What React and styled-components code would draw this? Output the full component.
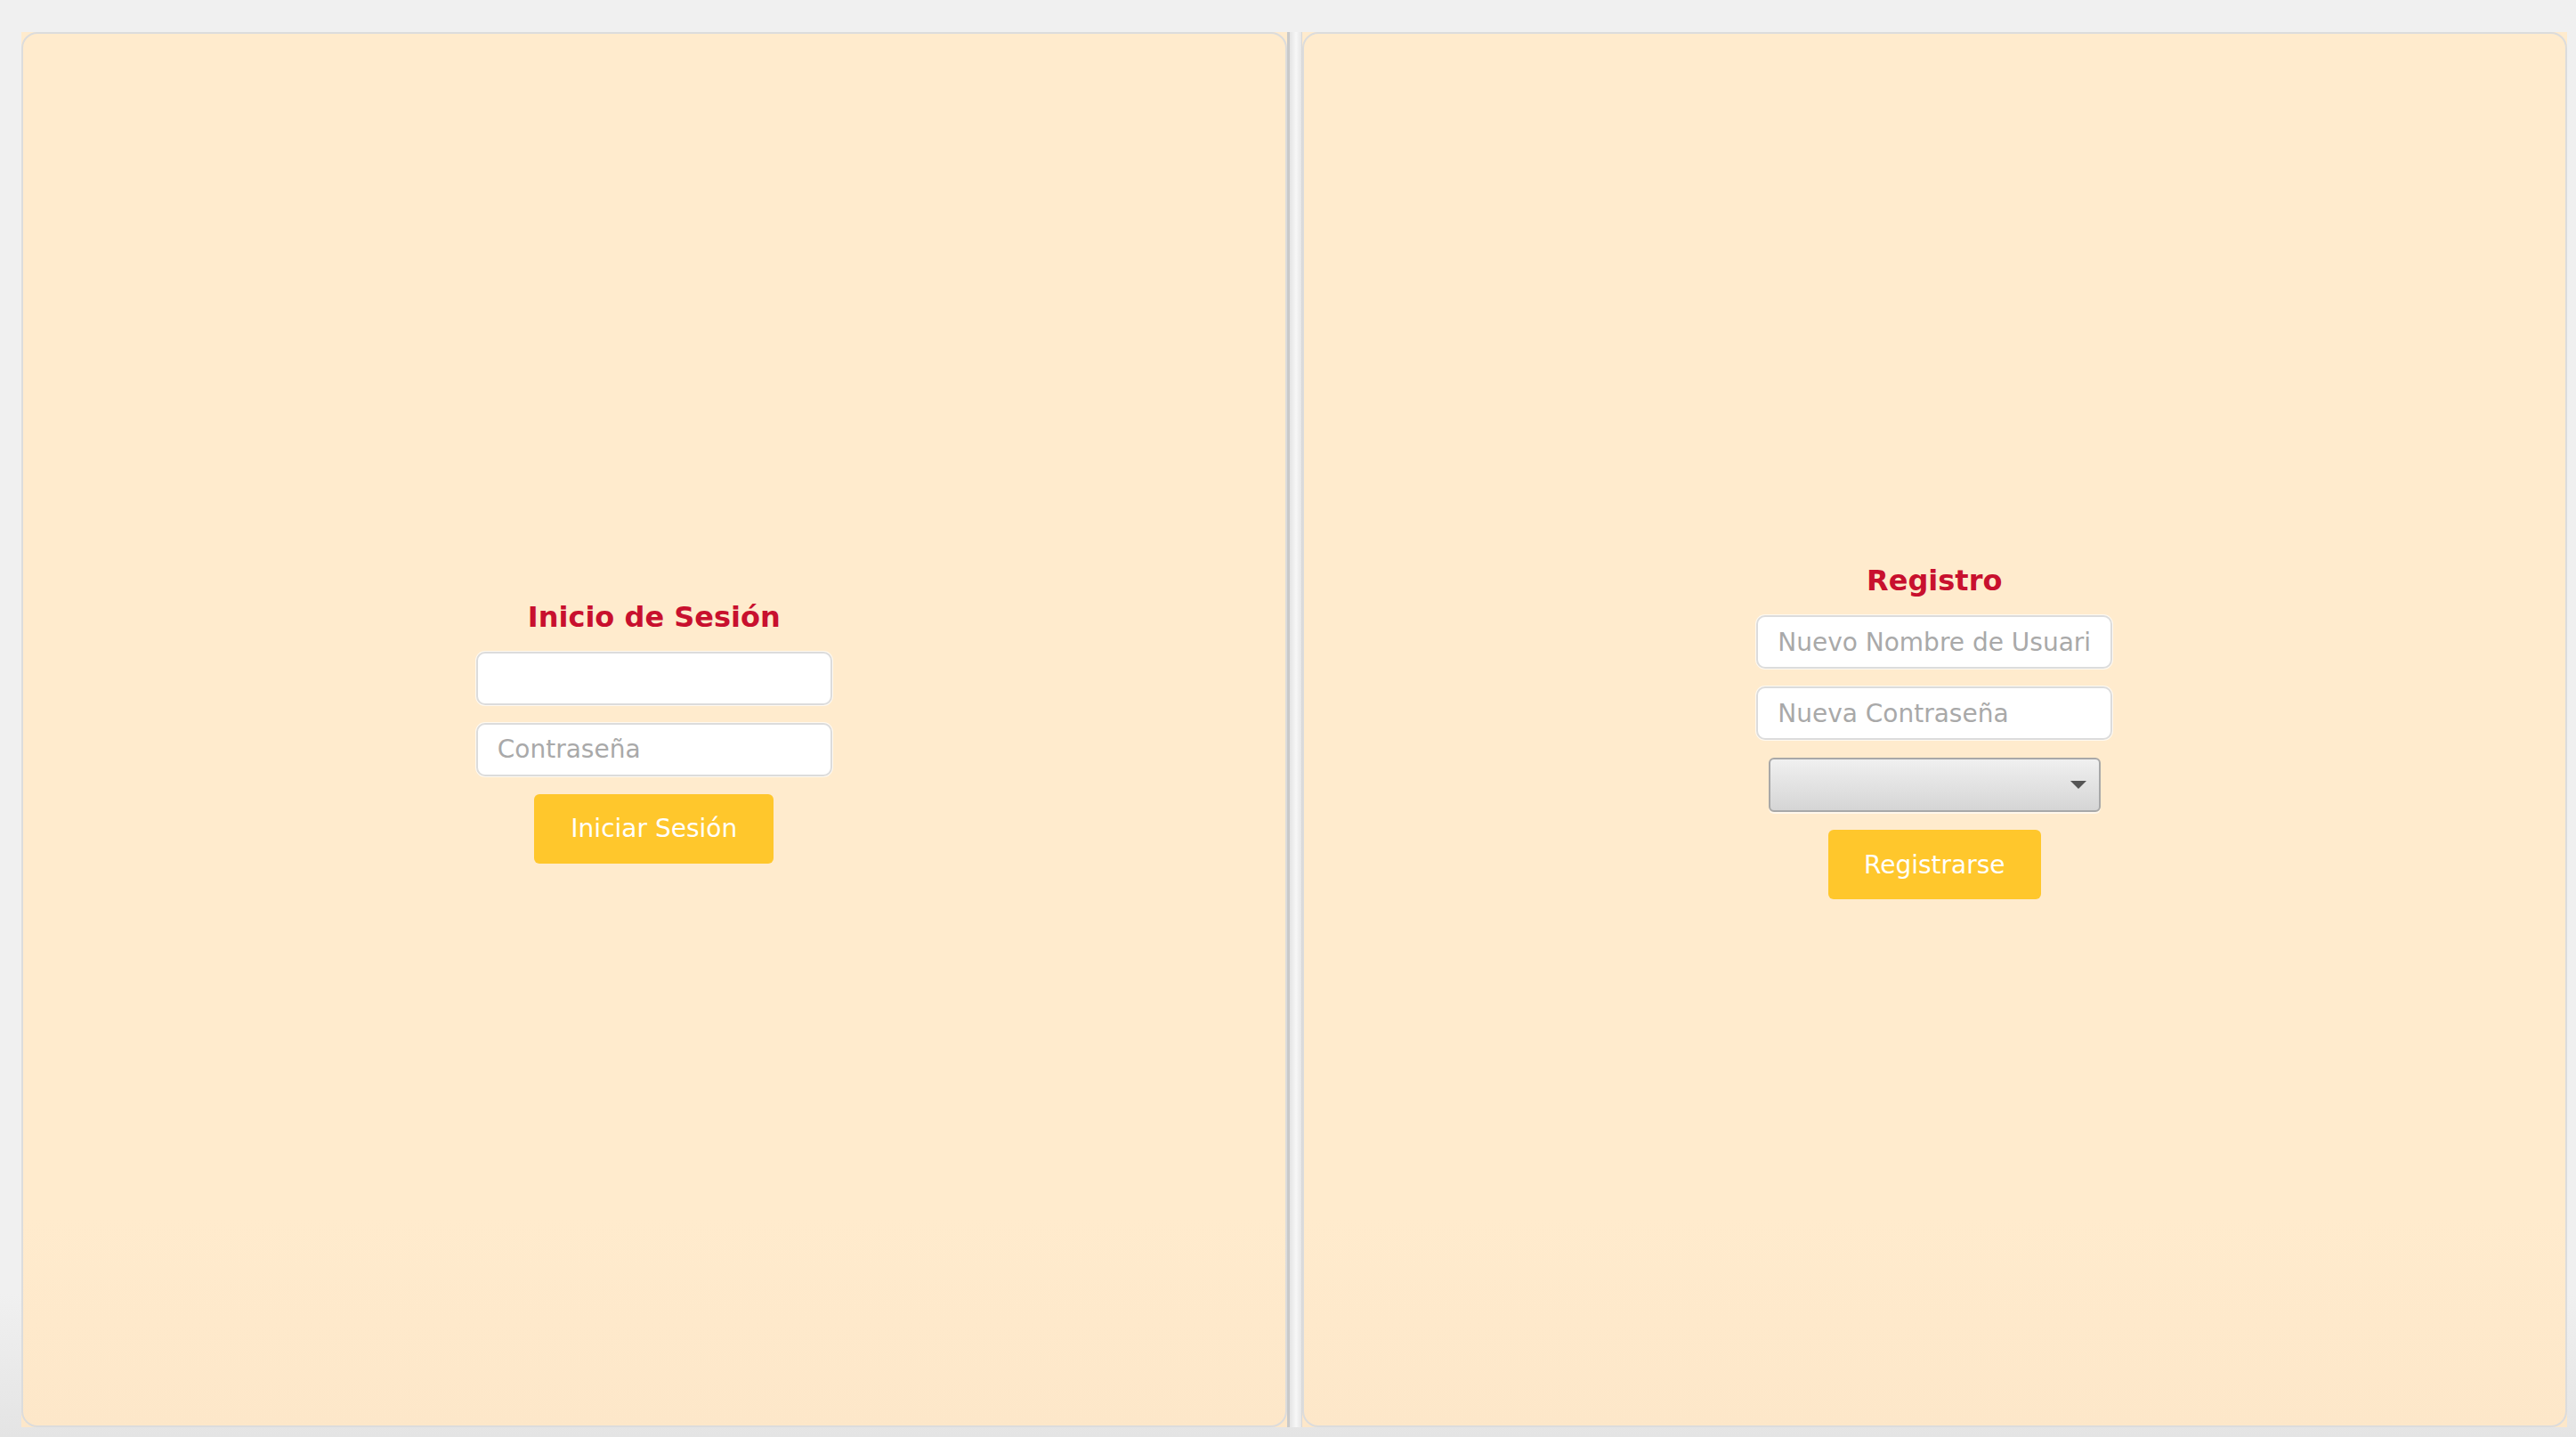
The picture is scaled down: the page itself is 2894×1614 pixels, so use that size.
import React from 'react';
import styled, { createGlobalStyle } from 'styled-components';

const GlobalStyle = createGlobalStyle`
    html, body {
        margin: 0;
        padding: 0;
        background: #f0f0f0;
    }
    body {
        font-family: "DejaVu Sans", Verdana, sans-serif;
    }
`;

const Window = styled.div`
    box-sizing: border-box;
    height: 1614px;
    padding: 36px 10px 11px 24px;
    background: linear-gradient(to bottom, #f0f0f0 90%, #e4e4e4 100%);
    display: flex;
`;

const SplitPane = styled.div`
    flex: 1;
    display: flex;
    background: linear-gradient(to bottom, #ffebcd 85%, #fde7c9 100%);
`;

const Pane = styled.div`
    flex: 1;
    box-sizing: border-box;
    border: 2px solid #dcdcdc;
    border-radius: 18px;
    display: flex;
    align-items: center;
    justify-content: center;
`;

const Divider = styled.div`
    width: 17px;
    box-sizing: border-box;
    border-left: 3px solid #c9c9c9;
    border-right: 1px solid #d8d8d8;
    background: linear-gradient(to right, #e4e4e4, #f7f7f7 55%, #e6e6e6);
`;

const Form = styled.form`
    display: flex;
    flex-direction: column;
    align-items: center;
    gap: 20px;
    margin-top: 4px;
`;

const Title = styled.h2`
    margin: 0;
    font-family: "DejaVu Sans", Verdana, sans-serif;
    font-size: 32px;
    font-weight: bold;
    color: #c8102e;
`;

const Field = styled.input`
    box-sizing: border-box;
    width: 400px;
    height: 60px;
    padding: 0 22px;
    border: 2px solid #dcdcdc;
    border-radius: 10px;
    background: #ffffff;
    box-shadow: 0 0 0 1px rgba(255, 255, 255, 0.7);
    font-family: "DejaVu Sans", Verdana, sans-serif;
    font-size: 28px;
    color: #333;
    outline: none;

    &::placeholder {
        color: #a9a9a9;
    }
`;

const Select = styled.div`
    box-sizing: border-box;
    width: 373px;
    height: 61px;
    border: 2px solid #a8a8a8;
    border-radius: 6px;
    background: linear-gradient(to bottom, #f0f0f0, #d5d5d5);
    box-shadow: 0 2px 0 rgba(255, 255, 255, 0.6);
    display: flex;
    align-items: center;
    justify-content: flex-end;
    padding-right: 14px;
`;

const Arrow = styled.span`
    width: 0;
    height: 0;
    border-left: 9px solid transparent;
    border-right: 9px solid transparent;
    border-top: 9px solid #555;
`;

const Button = styled.button`
    height: 78px;
    padding: 0 ${props => props.$padX}px;
    border: none;
    border-radius: 6px;
    background: #ffc72c;
    color: #ffffff;
    font-family: "DejaVu Sans", Verdana, sans-serif;
    font-size: 28px;
    cursor: pointer;
`;

const App = () => {
    return (
        <>
            <GlobalStyle />
            <Window>
                <SplitPane>
                    <Pane>
                        <Form onSubmit={e => e.preventDefault()}>
                            <Title>Inicio de Sesión</Title>
                            <Field type="text" />
                            <Field type="password" placeholder="Contraseña" />
                            <Button type="submit" $padX={41}>Iniciar Sesión</Button>
                        </Form>
                    </Pane>
                    <Divider />
                    <Pane>
                        <Form onSubmit={e => e.preventDefault()}>
                            <Title>Registro</Title>
                            <Field type="text" placeholder="Nuevo Nombre de Usuario" />
                            <Field type="password" placeholder="Nueva Contraseña" />
                            <Select>
                                <Arrow />
                            </Select>
                            <Button type="submit" $padX={40}>Registrarse</Button>
                        </Form>
                    </Pane>
                </SplitPane>
            </Window>
        </>
    );
};

export default App;
